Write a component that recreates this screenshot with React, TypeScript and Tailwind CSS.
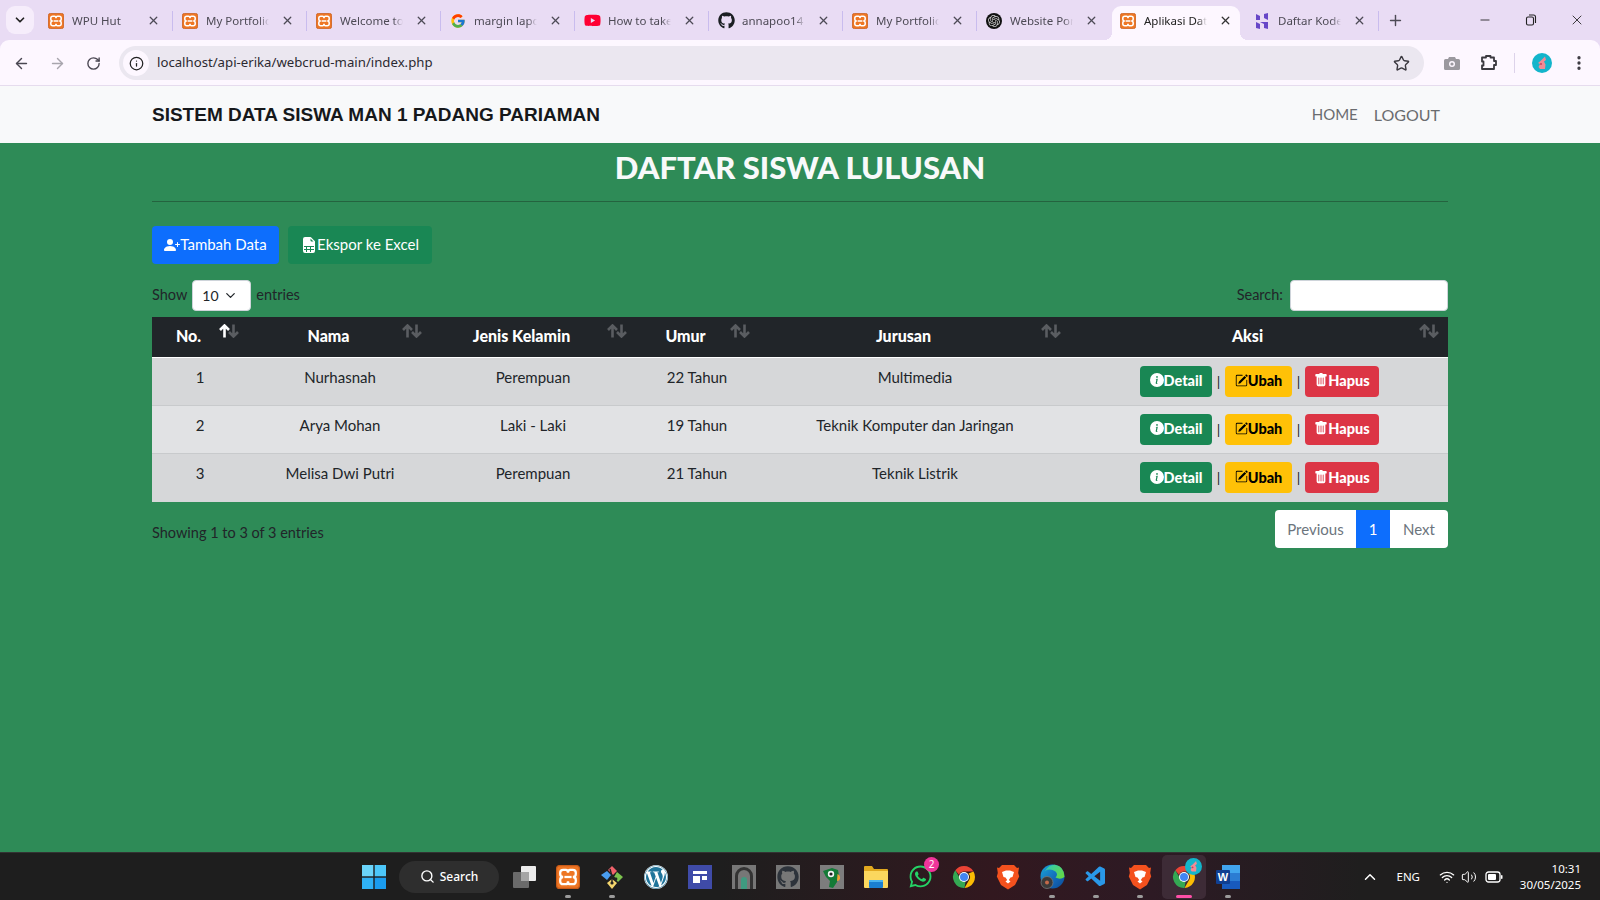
import React from "react";
import { ArrowLeft, ArrowRight, RotateCw, Info, Star, EllipsisVertical, X, Plus, Minus, ChevronDown, ChevronUp, Search, Wifi, Volume2 } from "lucide-react";
import { FcGoogle } from "react-icons/fc";
import { FaGithub, FaWordpress, FaWhatsapp, FaYoutube } from "react-icons/fa";
import { SiOpenai } from "react-icons/si";
import { VscVscode } from "react-icons/vsc";
import { BsPersonPlusFill, BsFileEarmarkSpreadsheetFill, BsInfoCircleFill, BsPencilSquare, BsTrashFill } from "react-icons/bs";

const Xampp = ({ s = 16 }: { s?: number }) => (
  <svg width={s} height={s} viewBox="0 0 20 20">
    <rect x="0.5" y="0.5" width="19" height="19" rx="2.500" fill="#ee7624" stroke="#c85a18" />
    <path d="M6 4h2.200Q10 4 10 6.500 10 4 11.800 4H14q2.500 0 2.500 2.500v1Q16.500 10 14 10q2.500 0 2.500 2.500v1Q16.500 16 14 16h-2.200Q10 16 10 13.500 10 16 8.200 16H6q-2.500 0-2.500-2.500v-1Q3.500 10 6 10 3.500 10 3.500 7.500v-1Q3.500 4 6 4Z" fill="none" stroke="#fff" strokeWidth="1.900" />
    <path d="M7 10h6" stroke="#fff" strokeWidth="1.900" />
  </svg>
);

const Hostinger = () => (
  <svg width="16" height="16" viewBox="0 0 16 16" fill="#6747c7">
    <path d="M2 1l4 2v4H2zM10 1l4-1v7l-4-2zM2 9l4 2v5l-4-1zM14 9v7l-4-1v-4l-4-2z" />
  </svg>
);

const ChromeLogo = ({ s = 24 }: { s?: number }) => (
  <svg width={s} height={s} viewBox="0 0 24 24">
    <path d="M12 1a11 11 0 0 1 9.500 5.500H12a5.500 5.500 0 0 0-5 3.200L3.300 5.300A11 11 0 0 1 12 1Z" fill="#ea4335" />
    <path d="M21.500 6.500A11 11 0 0 1 12.500 23l4.300-7.500A5.500 5.500 0 0 0 16.500 8.500Z" fill="#fbbc04" />
    <path d="M3.300 5.300 8 13.500a5.500 5.500 0 0 0 5.500 3l-1 6.500A11 11 0 0 1 3.300 5.300Z" fill="#34a853" />
    <circle cx="12" cy="12" r="5" fill="#fff" />
    <circle cx="12" cy="12" r="4" fill="#4285f4" />
  </svg>
);

const Avatar = ({ s = 20 }: { s?: number }) => (
  <svg width={s} height={s} viewBox="0 0 20 20">
    <circle cx="10" cy="10" r="10" fill="#13b5cb" />
    <path d="M13 3.500l1 3.500-2 1.500 1.500 3-.5 4.500H8l-1.500-2 1.500-3-2-1 3-2.500Z" fill="#f28b95" />
    <circle cx="9" cy="11" r="1" fill="#c9405a" />
  </svg>
);

const BraveLogo = () => (
  <svg width="24" height="26" viewBox="0 0 24 26">
    <path d="M6 1h12l3 3 2-.5-.8 5.500 1 3.500L19 21l-7 4.500L5 21 .8 12.500l1-3.500L1 3.500 3 4Z" fill="#f4511e" />
    <path d="M6 8l4-1.500h4L18 8l-1.500 5-2 .5L12.800 16l1.700 1.500L12 19.500 9.500 17.500 11.200 16 9.500 13.500l-2-.5Z" fill="#fff" />
  </svg>
);

const tabs: { icon: React.ReactNode; title: string; active?: boolean }[] = [
  { icon: <Xampp />, title: "WPU Hut" },
  { icon: <Xampp />, title: "My Portfolio" },
  { icon: <Xampp />, title: "Welcome to" },
  { icon: <FcGoogle size={16} />, title: "margin lapo" },
  { icon: <FaYoutube size={17} color="#ff0033" />, title: "How to take" },
  { icon: <FaGithub size={17} color="#1b1f23" />, title: "annapoo14" },
  { icon: <Xampp />, title: "My Portfolio" },
  { icon: <span className="flex h-[16px] w-[16px] items-center justify-center rounded-full bg-[#111]"><SiOpenai size={12} color="#ccc" /></span>, title: "Website Por" },
  { icon: <Xampp />, title: "Aplikasi Dat", active: true },
  { icon: <Hostinger />, title: "Daftar Kode" },
];

function Tab({ icon, title, active, sep }: { icon: React.ReactNode; title: string; active?: boolean; sep: boolean }) {
  return (
    <div className={`relative flex h-[34px] shrink-0 items-center pb-[5px] pl-[8px] ${active ? "mr-[6px] w-[128px] rounded-t-[9px] bg-[#fdf7ff]" : "w-[134px]"}`}>
      <span className="flex w-[24px] shrink-0 items-center">{icon}</span>
      <span className={`w-[63px] shrink-0 whitespace-nowrap text-[11.5px] [mask-image:linear-gradient(to_right,black_85%,transparent_100%)] ${active ? "text-[#222]" : "text-[#4d4a55]"}`}>
        <span className="block h-[16px] overflow-hidden leading-[16px]">{title}</span>
      </span>
      <X size={13} strokeWidth={2.400} className={`ml-[12px] shrink-0 ${active ? "text-[#333]" : "text-[#4d4a55]"}`} />
      {sep && <span className="absolute right-[1px] top-[5px] h-[20px] w-[1px] bg-[#c9bcee]" />}
      {active && <span className="absolute bottom-0 left-[-8px] h-[8px] w-[8px] bg-[radial-gradient(circle_at_0_0,transparent_8px,#fdf7ff_8px)]" />}
      {active && <span className="absolute bottom-0 right-[-8px] h-[8px] w-[8px] bg-[radial-gradient(circle_at_100%_0,transparent_8px,#fdf7ff_8px)]" />}
    </div>
  );
}

function BrowserChrome() {
  return (
    <div className="h-[86px] bg-[#e9dcf4]">
      <div className="flex h-[40px] items-end pl-[6px]">
        <div className="mb-[6px] mr-[6px] flex h-[28px] w-[28px] items-center justify-center rounded-[9px] bg-[#f6edfb]">
          <ChevronDown size={14} strokeWidth={3} className="text-[#222]" />
        </div>
        {tabs.map((t, i) => (
          <Tab key={i} {...t} sep={!t.active && i !== 7} />
        ))}
        <Plus size={17} strokeWidth={2} className="mb-[11px] ml-[7px] text-[#4d4a55]" />
        <div className="mb-[12px] ml-auto flex items-center text-[#222]">
          <Minus size={14} strokeWidth={1.500} className="mr-[33px]" />
          <svg width="12" height="12" viewBox="0 0 12 12" fill="none" stroke="#222" strokeWidth="1.100" className="mr-[32px]"><rect x="1.500" y="3" width="7" height="8" rx="1.500" /><path d="M4 1h4.500A2 2 0 0 1 10.500 3v6" /></svg>
          <X size={16} strokeWidth={1.300} className="mr-[15px]" />
        </div>
      </div>
      <div className="flex h-[46px] items-center rounded-t-[9px] border-b border-[#e6dcee] bg-[#fdf7ff] pt-[1px]">
        <ArrowLeft size={17} strokeWidth={2} className="ml-[13px] text-[#4a4752]" />
        <ArrowRight size={17} strokeWidth={2} className="ml-[19px] text-[#a8a5ad]" />
        <RotateCw size={15} strokeWidth={2.200} className="ml-[20px] text-[#4a4752]" />
        <div className="ml-[18px] flex h-[34px] w-[1305px] items-center rounded-full bg-[#ebe7f0]">
          <span className="ml-[4px] flex h-[26px] w-[26px] items-center justify-center rounded-full bg-[#fdf7ff]">
            <Info size={15} strokeWidth={2} className="text-[#222]" />
          </span>
          <span className="ml-[8px] text-[13.2px] text-[#2b2930]">localhost/api-erika/webcrud-main/index.php</span>
          <Star size={17} strokeWidth={2} className="ml-auto mr-[14px] text-[#3b3940]" />
        </div>
        <svg width="16" height="14" viewBox="0 0 16 14" className="ml-[20px]"><path d="M1.500 3H4l1-2h6l1 2h2.500A1.500 1.500 0 0 1 16 4.500v8A1.500 1.500 0 0 1 14.500 14h-13A1.500 1.500 0 0 1 0 12.500v-8A1.500 1.500 0 0 1 1.500 3Z" fill="#9b999f" /><circle cx="8" cy="8" r="3" fill="#fdf7ff" /><circle cx="8" cy="8" r="1.600" fill="#9b999f" /></svg>
        <svg width="18" height="18" viewBox="0 0 18 18" fill="none" stroke="#3b3940" strokeWidth="1.800" strokeLinejoin="round" className="ml-[20px]"><path d="M2 3.500h4V2h4.500v1.500h3.500v3.500H16v4h-2v4H2v-3.500h1.500v-4H2Z" /></svg>
        <span className="ml-[16px] h-[20px] w-[1px] bg-[#ddd3ea]" />
        <span className="ml-[17px]"><Avatar /></span>
        <EllipsisVertical size={18} strokeWidth={2.400} className="ml-[18px] text-[#3b3940]" />
      </div>
    </div>
  );
}

const SortIcon = ({ active, right }: { active?: boolean; right: string }) => (
  <svg width="20" height="14" viewBox="0 0 20 14" fill="none" strokeWidth="2.600" className={`absolute top-[7px] ${right}`}>
    <path d="M5.500 13.500V1.500M1 6l4.500-4.500L10 6" stroke={active ? "#fff" : "#5a5d61"} />
    <path d="M14.500 .5v12M10 8l4.500 4.500L19 8" stroke="#5a5d61" />
  </svg>
);

const rows = [
  ["1", "Nurhasnah", "Perempuan", "22 Tahun", "Multimedia"],
  ["2", "Arya Mohan", "Laki - Laki", "19 Tahun", "Teknik Komputer dan Jaringan"],
  ["3", "Melisa Dwi Putri", "Perempuan", "21 Tahun", "Teknik Listrik"],
];

function Actions() {
  return (
    <div className="flex items-center pl-[70px] text-[14.5px] font-black">
      <span className="flex h-[31px] w-[72px] items-center justify-center rounded-[4px] bg-[#198754] text-white"><BsInfoCircleFill size={14} className="mb-[2px]" />Detail</span>
      <span className="w-[13px] text-center text-[14px] font-normal text-[#212529]">|</span>
      <span className="flex h-[31px] w-[67px] items-center justify-center rounded-[4px] bg-[#ffc107] text-black"><BsPencilSquare size={13} className="mb-[2px]" />Ubah</span>
      <span className="w-[13px] text-center text-[14px] font-normal text-[#212529]">|</span>
      <span className="flex h-[31px] w-[74px] items-center justify-center rounded-[4px] bg-[#dc3545] text-white"><BsTrashFill size={14} className="mb-[2px]" />Hapus</span>
    </div>
  );
}

const sortRight = ["right-[9px]", "right-[10px]", "right-[7px]", "right-[10px]", "right-[9px]", "right-[9px]"];

function MainPage() {
  return (
    <div className="flex-1 bg-[#2e8b57] font-['Lato',sans-serif] text-[#212529]">
      <nav className="flex h-[57px] items-center justify-between bg-[#f8f9fa] pl-[152px] pr-[160px]">
        <span className="font-['Liberation_Sans',sans-serif] text-[19px] font-bold leading-none text-[#16181b]">SISTEM DATA SISWA MAN 1 PADANG PARIAMAN</span>
        <div className="flex items-center gap-[16px] text-[16px] text-[#6a6c6f]"><span className="text-[15px]">HOME</span><span>LOGOUT</span></div>
      </nav>
      <div className="mx-[152px] flex flex-col">
        <h1 className="mt-[3px] border-b border-[#24633f] pb-[13px] text-center text-[31px] font-black leading-[42px] text-[#f8f9fa]">DAFTAR SISWA LULUSAN</h1>
        <div className="mt-[24px] flex gap-[9px] text-[15px]">
          <span className="flex h-[38px] w-[127px] items-center justify-center rounded-[4px] bg-[#0d6efd] pb-[1px] text-white"><BsPersonPlusFill size={16} />Tambah Data</span>
          <span className="flex h-[38px] w-[144px] items-center justify-center rounded-[4px] bg-[#198754] pb-[1px] text-white"><BsFileEarmarkSpreadsheetFill size={16} />Ekspor ke Excel</span>
        </div>
        <div className="mt-[16px] flex h-[31px] items-center justify-between text-[14.5px]">
          <div className="flex items-center">
            <span className="pb-[2px]">Show</span>
            <span className="ml-[5px] flex h-[31px] w-[59px] items-center justify-between rounded-[4px] border border-[#ced4da] bg-white pl-[9px] pr-[12px] text-[14px]">10<ChevronDown size={15} strokeWidth={2} /></span>
            <span className="ml-[5px] pb-[2px]">entries</span>
          </div>
          <div className="flex items-center">
            <span className="pb-[1px]">Search:</span>
            <span className="ml-[7px] h-[31px] w-[158px] rounded-[4px] border border-[#ced4da] bg-white" />
          </div>
        </div>
        <table className="mt-[6px] w-[1296px] table-fixed border-collapse text-center text-[15px]">
          <colgroup>
            <col className="w-[96px]" /><col className="w-[184px]" /><col className="w-[202px]" /><col className="w-[126px]" /><col className="w-[310px]" /><col className="w-[378px]" />
          </colgroup>
          <thead>
            <tr className="h-[40px] border-b border-white bg-[#212529] text-white">
              {["No.", "Nama", "Jenis Kelamin", "Umur", "Jurusan", "Aksi"].map((h, i) => (
                <th key={h} className="relative pb-[2px] pr-[23px] text-[16px] font-black">
                  {h}
                  <SortIcon active={i === 0} right={sortRight[i]} />
                </th>
              ))}
            </tr>
          </thead>
          <tbody>
            {rows.map((r, i) => (
              <tr key={r[0]} className={`h-[48px] border-b border-[#c8cacc] last:h-[49px] last:border-b-0 ${i % 2 ? "bg-[#e1e2e4]" : "bg-[#d6d7d9]"}`}>
                {r.map((c, j) => (
                  <td key={j} className="pb-[15px] pt-[7px] align-top leading-[24px] text-[#212529]">{c}</td>
                ))}
                <td className="align-middle"><Actions /></td>
              </tr>
            ))}
          </tbody>
        </table>
        <div className="mt-[8px] flex items-start justify-between">
          <span className="mt-[12px] text-[14.5px]">Showing 1 to 3 of 3 entries</span>
          <div className="flex h-[38px] overflow-hidden rounded-[4px] bg-white text-[15px] text-[#6c757d]">
            <span className="flex w-[81px] items-center justify-center">Previous</span>
            <span className="flex w-[34px] items-center justify-center bg-[#0d6efd] text-white">1</span>
            <span className="flex w-[58px] items-center justify-center">Next</span>
          </div>
        </div>
      </div>
    </div>
  );
}

const TaskIcon = ({ children, dot, active }: { children: React.ReactNode; dot?: boolean; active?: boolean }) => (
  <div className={`relative flex h-[44px] w-[44px] items-center justify-center rounded-[5px] ${active ? "bg-[#3d2b36]" : ""}`}>
    {children}
    {dot && <span className="absolute bottom-[1px] h-[3px] w-[6px] rounded-full bg-[#9b9b9b]" />}
    {active && <span className="absolute bottom-[1px] h-[3px] w-[16px] rounded-full bg-[#ff4fa8]" />}
  </div>
);

function Taskbar() {
  return (
    <div className="flex h-[48px] items-center border-t border-[#333] bg-[linear-gradient(90deg,#1e1e1e_0%,#1e1e1e_45%,#32181f_62%,#2d1a24_72%,#1f1e1e_85%,#1f1e1e_100%)] pl-[352px] font-['Noto_Sans',sans-serif] text-white">
      <TaskIcon>
        <svg width="24" height="24" viewBox="0 0 24 24"><rect width="11.300" height="11.300" fill="#6bd5fb" /><rect x="12.700" width="11.300" height="11.300" fill="#4cc7fa" /><rect y="12.700" width="11.300" height="11.300" fill="#2fb1f5" /><rect x="12.700" y="12.700" width="11.300" height="11.300" fill="#1a9cef" /></svg>
      </TaskIcon>
      <div className="ml-[3px] mr-[3px] flex h-[32px] w-[100px] items-center justify-center gap-[5px] rounded-full bg-[#2e2e2e] text-[12px] font-medium"><Search size={15} strokeWidth={2.200} />Search</div>
      <TaskIcon>
        <svg width="25" height="25" viewBox="0 0 25 25"><rect x="1" y="8" width="16" height="16" rx="1" fill="#6a6a6a" /><rect x="9" y="2" width="15" height="15" rx="1" fill="#ececec" /><rect x="9" y="8" width="8" height="9" fill="#a5a5a5" /></svg>
      </TaskIcon>
      <TaskIcon dot><Xampp s={24} /></TaskIcon>
      <TaskIcon dot>
        <svg width="26" height="26" viewBox="0 0 26 26"><path d="M9 6l4-4 5 5-4 4Z" fill="#f0626b" /><path d="M8 7l4 4-4 5-6-5Z" fill="#4a9df0" /><path d="M18 8l6 5-5 5-4-5Z" fill="#7cc24e" /><path d="M13 15l5 4-5 6-5-6Z" fill="#f5d76e" /><path d="M11 5l2 7v7M13 12l4 3" stroke="#222" strokeWidth="1.400" fill="none" /><circle cx="13" cy="19" r="1.600" fill="#222" /><circle cx="17" cy="15" r="1.400" fill="#222" /></svg>
      </TaskIcon>
      <TaskIcon><FaWordpress size={24} color="#21759b" className="rounded-full bg-white" /></TaskIcon>
      <TaskIcon>
        <svg width="24" height="24" viewBox="0 0 24 24"><rect width="24" height="24" fill="#3f4ba8" /><rect x="5" y="6" width="14" height="3" fill="#fff" /><rect x="5" y="11" width="7" height="7" fill="#fff" /><rect x="14" y="11" width="5" height="4" fill="#fff" /></svg>
      </TaskIcon>
      <TaskIcon>
        <svg width="24" height="24" viewBox="0 0 24 24"><rect width="24" height="24" fill="#777" /><path d="M3 24V11a9 9 0 0 1 18 0v13h-3V11a6 6 0 0 0-12 0v13Z" fill="#333" /><path d="M9 24v-9a3 3 0 0 1 6 0v9Z" fill="#3f9a80" /></svg>
      </TaskIcon>
      <TaskIcon>
        <svg width="24" height="24" viewBox="0 0 24 24"><rect width="24" height="24" fill="#777" /></svg>
        <FaGithub size={22} color="#2d333b" className="absolute" />
      </TaskIcon>
      <TaskIcon>
        <svg width="24" height="24" viewBox="0 0 24 24"><rect width="24" height="24" fill="#7d7d7d" /><path d="M3 6l9-3 6 2 1 6-2 6-4 6-4-1 1-6-4-4Z" fill="#137a36" /><circle cx="11" cy="9" r="3.200" fill="#f4f4f4" /><circle cx="11" cy="9" r="1.600" fill="#222" /><path d="M17.500 9q3 1 2.500 4.500-.5 2.500-3 2.500Z" fill="#f3a034" /></svg>
      </TaskIcon>
      <TaskIcon>
        <svg width="24" height="22" viewBox="0 0 24 22"><path d="M0 1a1 1 0 0 1 1-1h7l2 3h13a1 1 0 0 1 1 1v16H0Z" fill="#e2a91f" /><path d="M0 5h24v16a1 1 0 0 1-1 1H1a1 1 0 0 1-1-1Z" fill="#fbd75e" /><rect x="5" y="14" width="14" height="8" rx="1" fill="#1a7fd0" /><rect x="5" y="14" width="14" height="2" fill="#49b3ee" /></svg>
      </TaskIcon>
      <TaskIcon>
        <FaWhatsapp size={25} color="#25d366" />
        <span className="absolute right-[3px] top-[2px] flex h-[15px] w-[15px] items-center justify-center rounded-full bg-[#f0359b] text-[10px] leading-none text-white">2</span>
      </TaskIcon>
      <TaskIcon><ChromeLogo /></TaskIcon>
      <TaskIcon><BraveLogo /></TaskIcon>
      <TaskIcon dot>
        <svg width="25" height="25" viewBox="0 0 25 25"><defs><linearGradient id="edge" x1="0" y1="0" x2="1" y2="1"><stop offset="0" stopColor="#1aa6d8" /><stop offset="0.6" stopColor="#1367b8" /><stop offset="1" stopColor="#0c4b96" /></linearGradient><linearGradient id="edge2" x1="0" y1="0" x2="1" y2="0.600"><stop offset="0" stopColor="#2bc7c0" /><stop offset="1" stopColor="#62d84a" /></linearGradient></defs><circle cx="12.500" cy="12.500" r="12" fill="url(#edge)" /><path d="M5 7Q9 .5 15 .8 24 2 24.500 13q-4 3-9 .5 3-3 0-6Q10 4 5 7Z" fill="url(#edge2)" /><circle cx="7" cy="18.500" r="6" fill="#3a3a3a" stroke="#777" strokeWidth="0.800" /><circle cx="7" cy="18.500" r="2" fill="#c46a4a" /></svg>
      </TaskIcon>
      <TaskIcon dot><VscVscode size={24} color="#2a98e8" /></TaskIcon>
      <TaskIcon dot><BraveLogo /></TaskIcon>
      <TaskIcon active>
        <ChromeLogo />
        <span className="absolute right-[4px] top-[3px]"><Avatar s={17} /></span>
      </TaskIcon>
      <TaskIcon dot>
        <svg width="24" height="24" viewBox="0 0 24 24"><rect x="6" width="18" height="8" fill="#41a5ee" /><rect x="6" y="8" width="18" height="8" fill="#2b7cd3" /><rect x="6" y="16" width="18" height="8" fill="#185abd" /><rect y="5" width="14" height="14" rx="1" fill="#103f91" /><text x="7" y="16" textAnchor="middle" fontSize="11" fontWeight="700" fill="#fff" fontFamily="Liberation Sans">W</text></svg>
      </TaskIcon>
      <div className="ml-auto flex items-center pr-[19px]">
        <ChevronUp size={18} strokeWidth={2} />
        <span className="ml-[17px] text-[11.500px]">ENG</span>
        <Wifi size={16} strokeWidth={2} className="ml-[19px]" />
        <Volume2 size={16} strokeWidth={1.500} className="ml-[6px]" />
        <svg width="18" height="12" viewBox="0 0 18 12" fill="none" className="ml-[8px]"><rect x="1" y="1" width="14" height="10" rx="2.500" stroke="#fff" strokeWidth="1.300" /><rect x="3" y="3" width="8" height="6" rx="1" fill="#fff" /><rect x="16" y="4" width="1.500" height="4" rx="0.700" fill="#fff" /></svg>
        <div className="ml-[16px] flex w-[62px] flex-col items-end text-[11.500px] leading-[16px]"><span>10:31</span><span>30/05/2025</span></div>
      </div>
    </div>
  );
}

export default function App() {
  return (
    <div className="flex h-[900px] w-[1600px] flex-col overflow-hidden font-['Noto_Sans',sans-serif]">
      <BrowserChrome />
      <MainPage />
      <Taskbar />
    </div>
  );
}
